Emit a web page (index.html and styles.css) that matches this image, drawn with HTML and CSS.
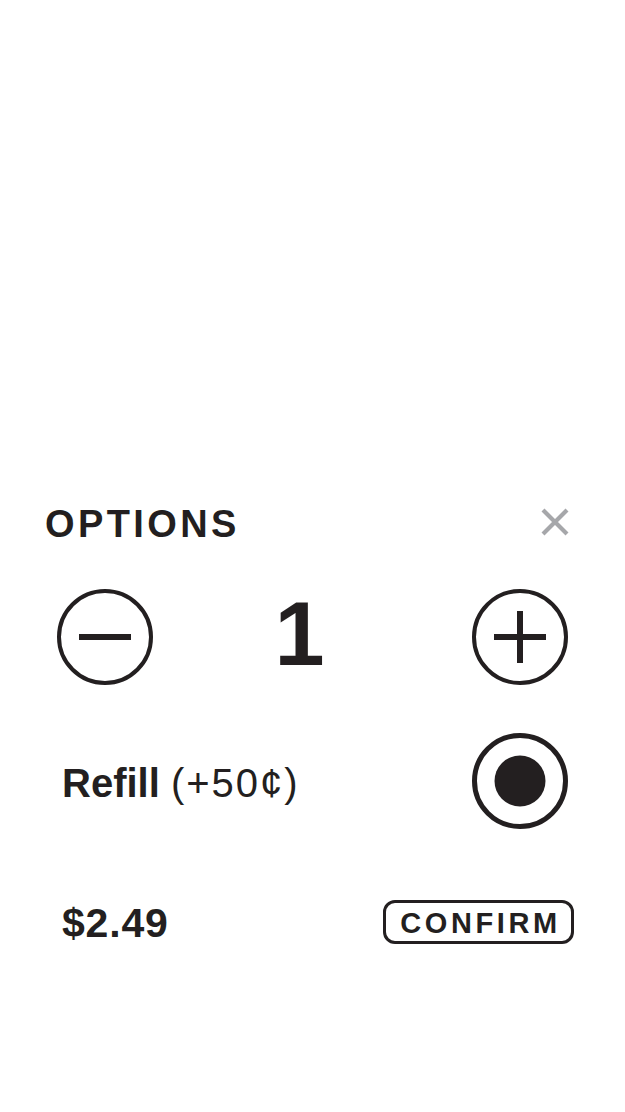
FILE: index.html
```html
<!DOCTYPE html>
<html lang="en">
<head>
<meta charset="utf-8">
<title>Options</title>
<link rel="stylesheet" href="styles.css">
</head>
<body>
<div class="page">
  <section class="sheet">
    <header class="head">
      <h1 class="title">OPTIONS</h1>
      <button class="close" aria-label="Close">
        <svg width="28" height="28" viewBox="0 0 28 28"><path d="M2 2 L26 26 M26 2 L2 26" stroke="#a6a7aa" stroke-width="4.2" fill="none"/></svg>
      </button>
    </header>
    <div class="stepper">
      <button class="round" aria-label="Decrease">
        <svg width="96" height="96" viewBox="0 0 96 96"><circle cx="48" cy="48" r="46" stroke="#231f20" stroke-width="4" fill="none"/><path d="M22 48 H74" stroke="#231f20" stroke-width="6"/></svg>
      </button>
      <span class="qty">1</span>
      <button class="round" aria-label="Increase">
        <svg width="96" height="96" viewBox="0 0 96 96"><circle cx="48" cy="48" r="46" stroke="#231f20" stroke-width="4" fill="none"/><path d="M22 48 H74 M48 22 V74" stroke="#231f20" stroke-width="6"/></svg>
      </button>
    </div>
    <div class="refill">
      <span class="label"><b>Refill</b> <span class="extra">(+50¢)</span></span>
      <span class="radio">
        <svg width="96" height="96" viewBox="0 0 96 96"><circle cx="48" cy="48" r="45.5" stroke="#231f20" stroke-width="5" fill="none"/><circle cx="48" cy="48" r="25.5" fill="#231f20"/></svg>
      </span>
    </div>
    <footer class="foot">
      <span class="price">$2.49</span>
      <button class="confirm">CONFIRM</button>
    </footer>
  </section>
</div>
</body>
</html>
```
FILE: styles.css
```css
* { box-sizing: border-box; }
html, body { margin: 0; padding: 0; background: #fff; }
body {
  font-family: "Liberation Sans", Arial, Helvetica, sans-serif;
  color: #231f20;
}
.page { padding-top: 500px; }
.sheet { display: flex; flex-direction: column; }
button {
  font: inherit; color: inherit; background: none; border: 0; padding: 0; margin: 0;
  display: flex; align-items: center; justify-content: center;
}
.head {
  height: 44px;
  display: flex; align-items: center; justify-content: space-between;
  padding: 0 56px 0 45px;
}
.title {
  margin: 0; font-size: 38px; font-weight: 700; letter-spacing: 3.4px; line-height: 1;
  padding-top: 4px;
}
.close { width: 28px; height: 28px; }
.stepper {
  margin-top: 45px; height: 96px;
  display: flex; align-items: center;
  padding: 0 0 0 57px;
}
.round { width: 96px; height: 96px; }
.qty {
  font-size: 90px; font-weight: 700; line-height: 1;
  width: 319px; text-align: center; padding-right: 26px; padding-bottom: 6px;
}
.refill {
  margin-top: 48px; height: 96px;
  display: flex; align-items: center; justify-content: space-between;
  padding: 0 57px 0 62px;
}
.label { font-size: 40px; line-height: 1; padding-top: 4px; }
.label b { font-weight: 700; }
.extra { letter-spacing: 2px; }
.radio { width: 96px; height: 96px; display: block; }
.radio svg { display: block; }
.foot {
  margin-top: 71px; height: 44px;
  display: flex; align-items: center; justify-content: space-between;
  padding: 0 51px 0 62px;
}
.price { font-size: 41px; font-weight: 700; line-height: 1; padding-top: 2px; letter-spacing: 0.8px; }
.confirm {
  width: 191px; height: 44px;
  border: 3px solid #231f20; border-radius: 12px;
  font-size: 29px; letter-spacing: 3.6px; font-weight: 700;
  padding-left: 4px; padding-top: 2px;
}
```
